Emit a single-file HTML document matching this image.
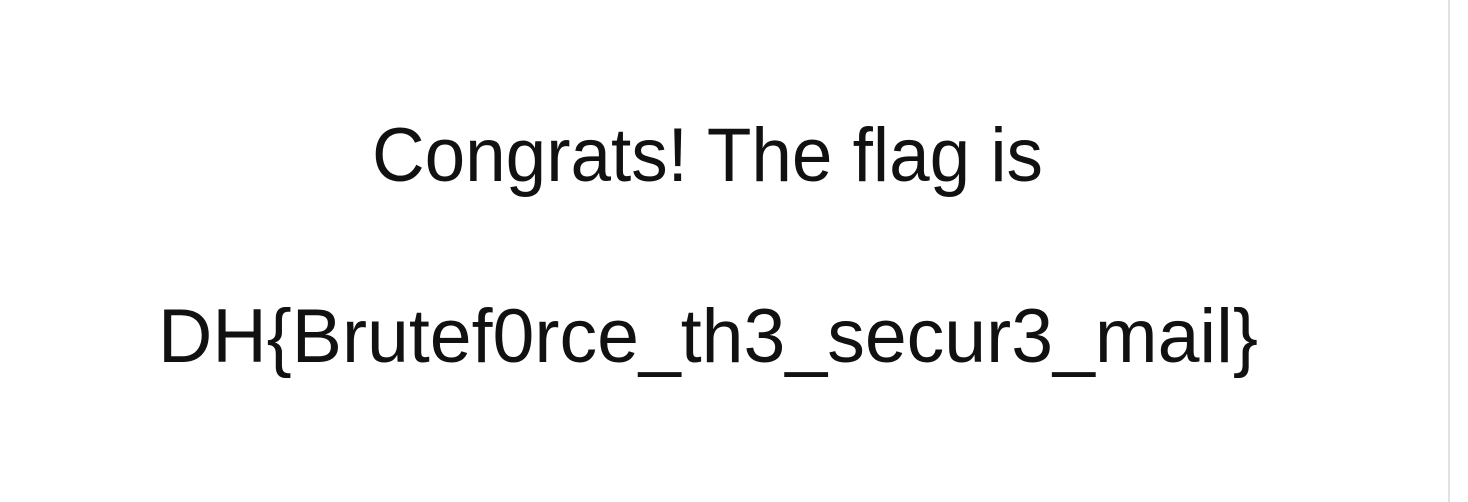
<!DOCTYPE html>
<html><head><meta charset="utf-8"><style>
html,body{margin:0;padding:0;background:#fff;width:1468px;height:502px;overflow:hidden}
.bar{position:absolute;left:1448px;top:0;width:2px;height:502px;background:#e2e2e2}
svg{position:absolute;left:0;top:0}
</style></head><body>
<svg width="1468" height="502" xmlns="http://www.w3.org/2000/svg">
<text x="372" y="181" font-family="Liberation Sans, sans-serif" font-size="76" fill="#111" textLength="671" lengthAdjust="spacingAndGlyphs">Congrats! The flag is</text>
<text x="158" y="362" font-family="Liberation Sans, sans-serif" font-size="76" fill="#111" textLength="1100" lengthAdjust="spacingAndGlyphs">DH{Brutef0rce_th3_secur3_mail}</text>
</svg>
<div class="bar"></div>
</body></html>
